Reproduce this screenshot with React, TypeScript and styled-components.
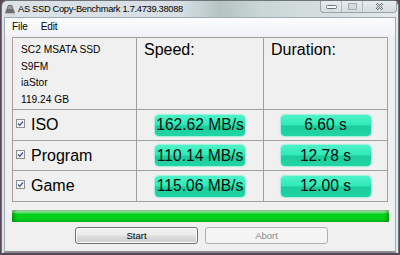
import React from "react";
import styled, { createGlobalStyle } from "styled-components";

const GlobalStyle = createGlobalStyle`
  html, body {
    margin: 0;
    padding: 0;
    width: 400px;
    height: 255px;
    overflow: hidden;
    background: #574857;
  }
`;

const Window = styled.div`
  width: 398px;
  height: 253px;
  margin-left: 1px;
  display: flex;
  flex-direction: column;
  background: linear-gradient(
    to right,
    #dce3e8 0%,
    #d8dfe4 45%,
    #b4c4c1 55%,
    #c9d6d4 65%,
    #e3e9ec 100%
  );
  border: 1px solid #6f7479;
  border-bottom: none;
  border-radius: 6px 6px 0 0;
  box-sizing: border-box;
`;

const TitleBar = styled.div`
  height: 16px;
  display: flex;
  align-items: flex-start;
  padding-left: 2px;
`;

const TitleIcon = styled.svg`
  width: 12px;
  height: 12px;
  margin-top: 2px;
  flex: none;
`;

const TitleText = styled.span`
  margin-left: 2px;
  margin-top: 2px;
  font-family: "Liberation Sans", Arial, sans-serif;
  font-size: 9.3px;
  letter-spacing: -0.3px;
  line-height: 13px;
  color: #000;
  white-space: nowrap;
`;

const Controls = styled.div`
  margin-left: auto;
  margin-right: 1px;
  display: flex;
  height: 11px;
  border: 1px solid #9aa3ab;
  border-top: none;
  border-radius: 0 0 4px 4px;
  overflow: hidden;
  background: linear-gradient(to bottom, #e6ecef, #d6dde2);
`;

const CtrlButton = styled.div<{ $w: number }>`
  width: ${(p) => p.$w}px;
  display: flex;
  align-items: center;
  justify-content: center;
  border-left: 1px solid #b3bbc1;
  &:first-child {
    border-left: none;
  }
`;

const Client = styled.div`
  flex: 1;
  margin: 0 2px 0 2px;
  display: flex;
  flex-direction: column;
  background: #f0f0f0;
  border: 1px solid #a2abb3;
  border-bottom: 2px solid #8b8b90;
`;

const MenuBar = styled.div`
  height: 17px;
  display: flex;
  align-items: center;
  gap: 13px;
  padding-left: 7px;
  background: linear-gradient(to bottom, #fbfcfd, #f1f3f6);
  font-family: "Liberation Sans", Arial, sans-serif;
  font-size: 10px;
  letter-spacing: -0.1px;
  color: #000;
`;

const Body = styled.div`
  padding: 2px 8px 0 7px;
  display: flex;
  flex-direction: column;
`;

const Table = styled.div`
  display: grid;
  grid-template-columns: 124px 127px 124px;
  grid-template-rows: 72px 31px 30px 31px;
  border-top: 1px solid #a0a0a0;
  border-left: 1px solid #a0a0a0;
  width: 376px;
  box-sizing: border-box;
`;

const Cell = styled.div<{ $center?: boolean }>`
  border-right: 1px solid #a0a0a0;
  border-bottom: 1px solid #a0a0a0;
  display: flex;
  align-items: center;
  justify-content: ${(p) => (p.$center ? "center" : "flex-start")};
  box-sizing: border-box;
`;

const InfoCell = styled(Cell)`
  flex-direction: column;
  align-items: flex-start;
  justify-content: flex-start;
  padding: 4px 0 0 8px;
  font-family: "Liberation Sans", Arial, sans-serif;
  font-size: 10.2px;
  line-height: 16.5px;
  color: #000;
`;

const HeadCell = styled(Cell)`
  align-items: flex-start;
  padding: 2px 0 0 7px;
  font-family: "Liberation Sans", Arial, sans-serif;
  font-size: 16px;
  line-height: 19px;
  color: #000;
`;

const LabelCell = styled(Cell)`
  padding-left: 3px;
  gap: 6px;
  font-family: "Liberation Sans", Arial, sans-serif;
  font-size: 16px;
  color: #000;
`;

const Check = styled.svg`
  width: 9px;
  height: 9px;
  flex: none;
  margin-top: -3px;
`;

const Pill = styled.div`
  width: 90px;
  height: 21px;
  border-radius: 4px;
  display: flex;
  align-items: center;
  justify-content: center;
  background: linear-gradient(
    to bottom,
    #4ff3c9 0%,
    #2fe9b7 48%,
    #1ccc9b 52%,
    #20d5a4 100%
  );
  box-shadow: 0 0 1px 1px rgba(90, 240, 200, 0.55);
  font-family: "Liberation Sans", Arial, sans-serif;
  font-size: 15.6px;
  color: #06100c;
  white-space: nowrap;
`;

const Progress = styled.div`
  margin-top: 8px;
  height: 12px;
  width: 377px;
  border-radius: 1px;
  background: linear-gradient(
    to bottom,
    #c5f3c8 0%,
    #7fe38a 18%,
    #00d21c 35%,
    #00cc1c 100%
  );
  box-shadow: inset 3px 0 3px rgba(0, 80, 0, 0.35),
    inset -3px 0 3px rgba(0, 80, 0, 0.35);
`;

const ButtonRow = styled.div`
  margin-top: 5px;
  display: flex;
  gap: 7px;
  padding-left: 63px;
`;

const Button = styled.div<{ $disabled?: boolean }>`
  width: 123px;
  height: 17px;
  box-sizing: border-box;
  border-radius: 3px;
  display: flex;
  align-items: center;
  justify-content: center;
  font-family: "Liberation Sans", Arial, sans-serif;
  font-size: 9.5px;
  border: 1px solid ${(p) => (p.$disabled ? "#adb2b5" : "#707070")};
  color: ${(p) => (p.$disabled ? "#8a8a8a" : "#000")};
  background: ${(p) =>
    p.$disabled
      ? "#f4f4f4"
      : "linear-gradient(to bottom, #f2f2f2 0%, #ebebeb 48%, #dddddd 52%, #cfcfcf 100%)"};
  box-shadow: ${(p) => (p.$disabled ? "none" : "inset 0 0 0 1px #fbfbfb")};
`;

const rows = [
  { name: "ISO", speed: "162.62 MB/s", time: "6.60 s" },
  { name: "Program", speed: "110.14 MB/s", time: "12.78 s" },
  { name: "Game", speed: "115.06 MB/s", time: "12.00 s" },
];

const CheckBox = () => (
  <Check viewBox="0 0 9 9">
    <rect x="0.5" y="0.5" width="8" height="8" fill="#f4f6f8" stroke="#8e8f8f" />
    <path d="M2 4.5 L3.8 6.3 L7 2.5" fill="none" stroke="#3b5a8a" strokeWidth="1.3" />
  </Check>
);

const App = () => {
  return (
    <>
      <GlobalStyle />
      <Window>
        <TitleBar>
          <TitleIcon viewBox="0 0 12 12">
            <path d="M1 10 L4 2 L8 2 L11 10 Z" fill="#6e6e6e" />
            <path d="M1 10 L11 10 L11 11.5 L1 11.5 Z" fill="#c4c4c4" />
            <path d="M4.5 3 L7.5 3 L8.5 6 L3.5 6 Z" fill="#9a9a9a" />
          </TitleIcon>
          <TitleText>AS SSD Copy-Benchmark 1.7.4739.38088</TitleText>
          <Controls>
            <CtrlButton $w={20}>
              <svg width="11" height="4" viewBox="0 0 11 4">
                <rect x="0.5" y="0.5" width="10" height="3" rx="1" fill="#f6f8f9" stroke="#6d7378" />
              </svg>
            </CtrlButton>
            <CtrlButton $w={20}>
              <svg width="9" height="7" viewBox="0 0 9 7">
                <rect x="0.5" y="0.5" width="8" height="6" fill="none" stroke="#a5acb1" />
                <rect x="2" y="2" width="5" height="3" fill="none" stroke="#c6ccd0" />
              </svg>
            </CtrlButton>
            <CtrlButton $w={33}>
              <svg width="9" height="9" viewBox="0 0 9 9">
                <path d="M1.5 1.5 L7.5 7.5 M7.5 1.5 L1.5 7.5" stroke="#6d7378" strokeWidth="2.4" />
                <path d="M1.5 1.5 L7.5 7.5 M7.5 1.5 L1.5 7.5" stroke="#f4f6f7" strokeWidth="1" />
              </svg>
            </CtrlButton>
          </Controls>
        </TitleBar>
        <Client>
          <MenuBar>
            <span>File</span>
            <span>Edit</span>
          </MenuBar>
          <Body>
            <Table>
              <InfoCell>
                <span>SC2 MSATA SSD</span>
                <span>S9FM</span>
                <span>iaStor</span>
                <span>119.24 GB</span>
              </InfoCell>
              <HeadCell>Speed:</HeadCell>
              <HeadCell>Duration:</HeadCell>
              {rows.map((r) => (
                <React.Fragment key={r.name}>
                  <LabelCell>
                    <CheckBox />
                    {r.name}
                  </LabelCell>
                  <Cell $center>
                    <Pill>{r.speed}</Pill>
                  </Cell>
                  <Cell $center>
                    <Pill>{r.time}</Pill>
                  </Cell>
                </React.Fragment>
              ))}
            </Table>
            <Progress />
            <ButtonRow>
              <Button>Start</Button>
              <Button $disabled>Abort</Button>
            </ButtonRow>
          </Body>
        </Client>
      </Window>
    </>
  );
};

export default App;
